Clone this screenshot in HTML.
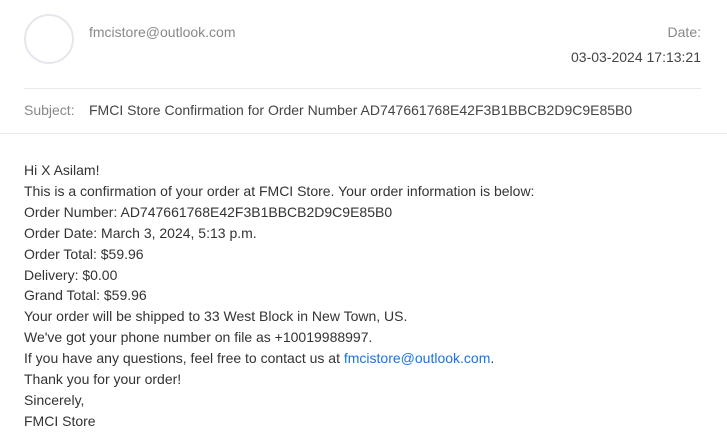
<!DOCTYPE html>
<html><head><style>
body{margin:0;width:727px;height:436px;background:#fff;font-family:"Liberation Sans",Arial,sans-serif;font-size:14px;color:#333;overflow:hidden;position:relative}
.a{position:absolute;white-space:nowrap}
.g{color:#888}
</style></head><body>
<div class="a" style="left:24px;top:14px;width:46px;height:46px;border:2px solid #e6e6ee;border-radius:50%"></div>
<div class="a g" style="left:89px;top:24px">fmcistore@outlook.com</div>
<div class="a g" style="right:26px;top:24px">Date:</div>
<div class="a" style="right:26px;top:49px;color:#444">03-03-2024 17:13:21</div>
<div class="a" style="left:24px;top:88px;width:677px;height:1px;background:#e8e8ee"></div>
<div class="a g" style="left:24px;top:102px">Subject:</div>
<div class="a" style="left:89px;top:102px;color:#444">FMCI Store Confirmation for Order Number AD747661768E42F3B1BBCB2D9C9E85B0</div>
<div class="a" style="left:0;top:133px;width:727px;height:1px;background:#e8e8ee"></div>
<div class="a" style="left:24px;top:160px;line-height:20.9px">
Hi X Asilam!<br>
This is a confirmation of your order at FMCI Store. Your order information is below:<br>
Order Number: AD747661768E42F3B1BBCB2D9C9E85B0<br>
Order Date: March 3, 2024, 5:13 p.m.<br>
Order Total: $59.96<br>
Delivery: $0.00<br>
Grand Total: $59.96<br>
Your order will be shipped to 33 West Block in New Town, US.<br>
We've got your phone number on file as +10019988997.<br>
If you have any questions, feel free to contact us at <span style="color:#1a73e8">fmcistore@outlook.com</span>.<br>
Thank you for your order!<br>
Sincerely,<br>
FMCI Store
</div>
</body></html>
